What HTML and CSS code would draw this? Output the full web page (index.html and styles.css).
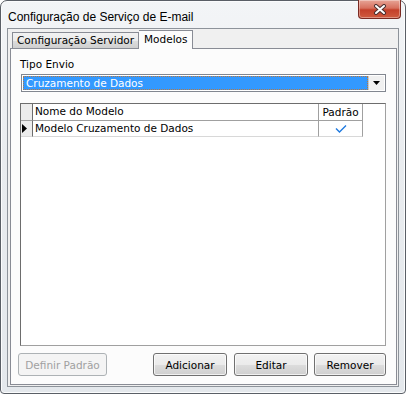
FILE: index.html
```html
<!DOCTYPE html>
<html lang="pt">
<head>
    <meta charset="UTF-8">
    <title>Configuração de Serviço de E-mail</title>
    <link rel="stylesheet" href="styles.css">
</head>
<body>
    <div class="window">
        <div class="titlebar">
            <span class="title">Configuração de Serviço de E-mail</span>
            <button class="close">
                <svg width="14" height="11" viewBox="0 0 14 11">
                    <path d="M3 2 L11 9 M11 2 L3 9" stroke="#4a3030" stroke-width="4" stroke-linecap="round"/>
                    <path d="M3 2 L11 9 M11 2 L3 9" stroke="#ffffff" stroke-width="2" stroke-linecap="round"/>
                </svg>
            </button>
        </div>
        <div class="client">
            <div class="tabs">
                <div class="tab">Configuração Servidor</div>
                <div class="tab active">Modelos</div>
            </div>
            <div class="panel">
                <label class="label">Tipo Envio</label>
                <div class="combo">
                    <div class="combo-value"><span>Cruzamento de Dados</span></div>
                    <div class="combo-btn">
                        <svg width="7" height="4" viewBox="0 0 7 4"><path d="M0 0 H7 L3.5 4 Z" fill="#000"/></svg>
                    </div>
                </div>
                <div class="grid">
                    <div class="row head">
                        <div class="cell ind"></div>
                        <div class="cell name">Nome do Modelo</div>
                        <div class="cell flag">Padrão</div>
                    </div>
                    <div class="row">
                        <div class="cell ind">
                            <svg width="5" height="9" viewBox="0 0 5 9"><path d="M0 0 L5 4.5 L0 9 Z" fill="#000"/></svg>
                        </div>
                        <div class="cell name">Modelo Cruzamento de Dados</div>
                        <div class="cell flag">
                            <svg width="12" height="8" viewBox="0 0 12 8"><path d="M1 3.5 L4.5 7 L11 0.5" stroke="#1f7ae0" stroke-width="1.4" fill="none"/></svg>
                        </div>
                    </div>
                </div>
                <div class="actions">
                    <button class="btn" disabled>Definir Padrão</button>
                    <div class="spacer"></div>
                    <button class="btn">Adicionar</button>
                    <button class="btn">Editar</button>
                    <button class="btn last">Remover</button>
                </div>
            </div>
        </div>
    </div>
</body>
</html>
```

FILE: styles.css
```css
* {
    margin: 0;
    padding: 0;
    box-sizing: border-box;
}

body {
    background: #ffffff;
    font-family: 'DejaVu Sans', Verdana, sans-serif;
    font-size: 10.5px;
    color: #000;
}

.window {
    width: 406px;
    height: 394px;
    border: 1px solid #5a5f66;
    border-radius: 7px 7px 4px 4px;
    background: linear-gradient(180deg, #f3f5f7 0%, #e9ecef 40%, #e4e8ec 100%);
    display: flex;
    flex-direction: column;
    box-shadow: inset 0 0 0 1px #fbfcfd;
}

.titlebar {
    height: 27px;
    display: flex;
    justify-content: space-between;
    align-items: flex-start;
    padding-left: 7px;
}

.title {
    font-family: 'Liberation Sans', Arial, sans-serif;
    font-size: 12px;
    color: #000;
    margin-top: 9px;
}

.close {
    width: 43px;
    height: 19px;
    margin-right: 4px;
    margin-top: -1px;
    border: 1px solid #7a2a22;
    border-top: none;
    border-radius: 0 0 4px 4px;
    background: linear-gradient(180deg, #e7a597 0%, #d7705e 45%, #c4402a 55%, #cf5b3f 100%);
    box-shadow: inset 0 0 0 1px rgba(255, 255, 255, 0.35);
    display: flex;
    align-items: center;
    justify-content: center;
}

.client {
    flex: 1;
    margin: 0 6px 6px 6px;
    border: 1px solid #8d939a;
    background: #f0f0f0;
    padding: 0 0 1px 1px;
    display: flex;
    flex-direction: column;
}

.tabs {
    display: flex;
    align-items: flex-end;
    height: 19px;
    padding-left: 3px;
    position: relative;
    z-index: 1;
}

.tab {
    height: 16px;
    padding: 0 4px 0 4px;
    border: 1px solid #898c95;
    border-bottom: none;
    background: linear-gradient(180deg, #f2f2f2 0%, #ebebeb 50%, #dddddd 51%, #cfcfcf 100%);
    line-height: 15px;
    color: #000;
}

.tab.active {
    height: 19px;
    margin-bottom: -1px;
    padding: 0 5px;
    background: #fcfcfc;
    border-left: none;
    line-height: 16px;
}

.panel {
    flex: 1;
    margin: 0 1px 0 1px;
    border: 1px solid #898c95;
    background: #fcfcfc;
    padding: 9px 10px 0 9px;
    display: flex;
    flex-direction: column;
}

.label {
    display: block;
    line-height: 13px;
    margin-bottom: 3px;
}

.combo {
    display: flex;
    height: 18px;
    margin-left: 1px;
    border: 1px solid #828790;
    background: #ffffff;
    padding: 1px;
}

.combo-value {
    flex: 1;
    background: #3399ff;
    border: 1px dotted #b87840;
    color: #ffffff;
    line-height: 12px;
    padding-left: 2px;
}

.combo-btn {
    width: 16px;
    display: flex;
    align-items: center;
    justify-content: center;
    border-left: 1px solid #c8c8c8;
    background: #f0f0f0;
}

.grid {
    margin-top: 11px;
    height: 243px;
    border: 1px solid #a0a0a0;
    border-top-color: #6d6d6d;
    border-left-color: #6d6d6d;
    background: #ffffff;
}

.row {
    display: flex;
    height: 16px;
}

.row.head {
    height: 17px;
}

.cell {
    border-right: 1px solid #a0a0a0;
    border-bottom: 1px solid #d8d8d8;
    line-height: 15px;
    padding-left: 2px;
    white-space: nowrap;
}

.head .cell {
    border-bottom: 1px solid #a0a0a0;
}

.cell.ind {
    width: 12px;
    background: #ececec;
    border-right-color: #6d6d6d;
    padding-left: 1px;
    display: flex;
    align-items: center;
}

.cell.name {
    width: 286px;
}

.cell.flag {
    width: 44px;
    display: flex;
    align-items: center;
    justify-content: center;
    padding-left: 0;
}

.actions {
    display: flex;
    gap: 7px;
    margin-top: 7px;
    margin-left: -2px;
}

.spacer {
    flex: 1;
}

.btn {
    height: 23px;
    width: 74px;
    border: 1px solid #707070;
    border-radius: 3px;
    background: linear-gradient(180deg, #f2f2f2 0%, #ebebeb 50%, #dddddd 51%, #cfcfcf 100%);
    box-shadow: inset 0 0 0 1px rgba(255, 255, 255, 0.7);
    font-family: 'DejaVu Sans', Verdana, sans-serif;
    font-size: 10.5px;
    color: #000;
}

.btn.last {
    width: 72px;
    margin-left: -1px;
}

.btn[disabled] {
    width: 89px;
    border-color: #adb2b5;
    background: #f4f4f4;
    color: #a0a0a0;
    box-shadow: none;
}
```
